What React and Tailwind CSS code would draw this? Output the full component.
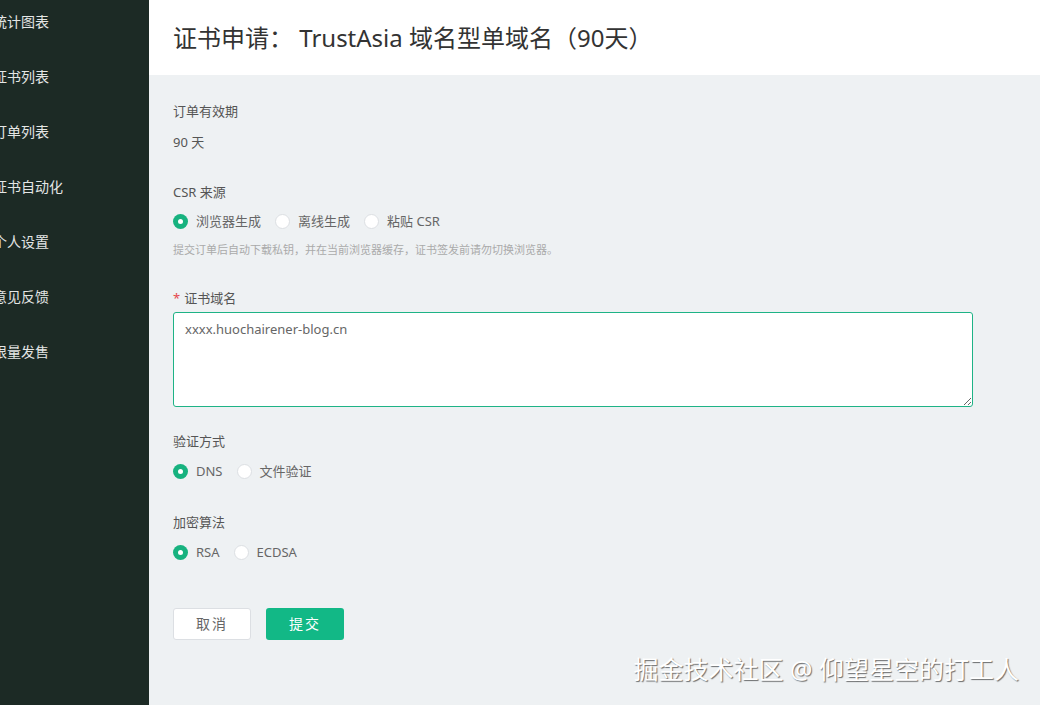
import { useState } from 'react';

const NAV = ['统计图表', '证书列表', '订单列表', '证书自动化', '个人设置', '意见反馈', '限量发售'];

function Radio({ checked, label, onClick }) {
  return (
    <button type="button" onClick={onClick} className="mr-[14px] flex items-center gap-2 text-[13px] text-[#666]">
      <span
        className={
          checked
            ? 'flex h-[15px] w-[15px] items-center justify-center rounded-full bg-[#17b27f]'
            : 'flex h-[15px] w-[15px] items-center justify-center rounded-full border border-[#dcdfe3] bg-white'
        }
      >
        {checked ? <span className="h-[5px] w-[5px] rounded-full bg-white" /> : null}
      </span>
      <span>{label}</span>
    </button>
  );
}

function RadioGroup({ options, value, onChange }) {
  return (
    <div className="flex items-center">
      {options.map((opt) => (
        <Radio key={opt} label={opt} checked={value === opt} onClick={() => onChange(opt)} />
      ))}
    </div>
  );
}

export default function App() {
  const [csr, setCsr] = useState('浏览器生成');
  const [verify, setVerify] = useState('DNS');
  const [algo, setAlgo] = useState('RSA');
  const [domain, setDomain] = useState('xxxx.huochairener-blog.cn');

  return (
    <div
      className="relative flex h-[705px] w-[1040px] overflow-hidden"
      style={{ fontFamily: '"Noto Sans", "Noto Sans CJK SC", sans-serif' }}
    >
      <aside className="w-[149px] shrink-0 bg-[#1c2a25]">
        <nav className="ml-[-7px] flex flex-col pt-[11px]">
          {NAV.map((item) => (
            <div key={item} className="h-[55px] text-[14px] leading-[22px] text-[#e4e6e5]">
              {item}
            </div>
          ))}
        </nav>
      </aside>

      <main className="flex flex-1 flex-col bg-[#eef1f3]">
        <header className="flex h-[75px] items-center bg-white pl-[24px]">
          <h1 className="text-[24px] font-normal text-[#333]">证书申请： TrustAsia 域名型单域名（90天）</h1>
        </header>

        <div className="flex flex-col pl-[24px] pt-[25px]">
          <div className="text-[13px] leading-[22px] text-[#555]">订单有效期</div>
          <div className="mt-[9px] text-[13px] leading-[22px] text-[#555]">90 天</div>

          <div className="mt-[28px] text-[13px] leading-[22px] text-[#555]">CSR 来源</div>
          <div className="mt-[9px]">
            <RadioGroup options={['浏览器生成', '离线生成', '粘贴 CSR']} value={csr} onChange={setCsr} />
          </div>
          <div className="mt-[9px] text-[11px] leading-[18px] text-[#aaa]">
            提交订单后自动下载私钥，并在当前浏览器缓存，证书签发前请勿切换浏览器。
          </div>

          <div className="mt-[28px] text-[13px] leading-[22px] text-[#555]">
            <span className="mr-1 text-[#e5484d]">*</span>证书域名
          </div>
          <textarea
            value={domain}
            onChange={(e) => setDomain(e.target.value)}
            className="mt-[3px] h-[95px] w-[800px] rounded-[3px] border border-[#1eb386] bg-white px-[11px] py-[6px] text-[13px] leading-[20px] text-[#666] outline-none"
          />

          <div className="mt-[23px] text-[13px] leading-[22px] text-[#555]">验证方式</div>
          <div className="mt-[10px]">
            <RadioGroup options={['DNS', '文件验证']} value={verify} onChange={setVerify} />
          </div>

          <div className="mt-[30px] text-[13px] leading-[22px] text-[#555]">加密算法</div>
          <div className="mt-[10px]">
            <RadioGroup options={['RSA', 'ECDSA']} value={algo} onChange={setAlgo} />
          </div>

          <div className="mt-[45px] flex gap-[15px]">
            <button
              type="button"
              className="h-[32px] w-[78px] rounded-[3px] border border-[#dcdfe3] bg-white text-[14px] tracking-[2px] text-[#666]"
            >
              取消
            </button>
            <button
              type="button"
              className="h-[32px] w-[78px] rounded-[3px] bg-[#12b886] text-[14px] tracking-[2px] text-white"
            >
              提交
            </button>
          </div>
        </div>
      </main>

      <div
        className="absolute bottom-[20px] right-[21px] text-[25px] leading-[32px] text-white"
        style={{ textShadow: '1px 1px 1px rgba(0,0,0,0.55)' }}
      >
        掘金技术社区 @ 仰望星空的打工人
      </div>
    </div>
  );
}
